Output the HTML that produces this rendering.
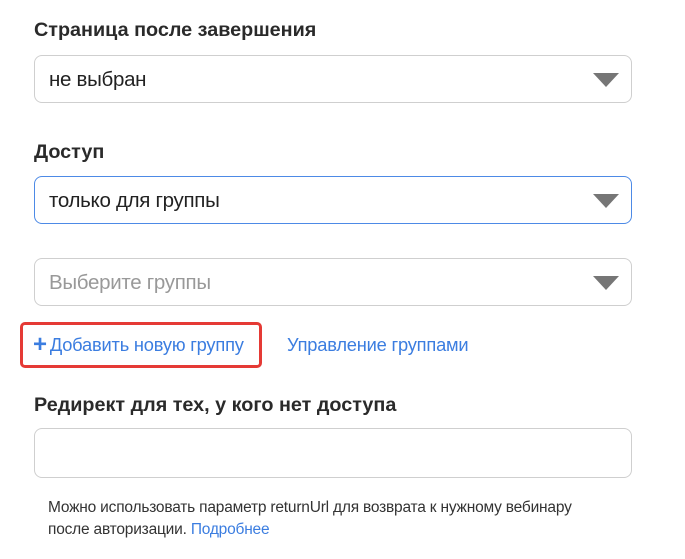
<!DOCTYPE html>
<html><head><meta charset="utf-8"><style>
body{margin:0;width:685px;height:559px;background:#fff;font-family:"Liberation Sans",sans-serif;position:relative;overflow:hidden;color:#222}
.a{position:absolute}
.lbl{font-weight:bold;font-size:19.8px;color:#2a2a2a;left:34px}
.box{left:34px;width:596px;height:46px;border:1px solid #cfcfcf;border-radius:8px;box-sizing:content-box}
.box span{position:absolute;left:14px;top:12px;font-size:20.5px;letter-spacing:-0.3px}
.tri{position:absolute;right:12px;top:17px;width:0;height:0;border-left:13px solid transparent;border-right:13px solid transparent;border-top:14px solid #767676}
.lnk{color:#3b7de0;font-size:18.3px;letter-spacing:-0.2px}
</style></head><body>
<div class="a lbl" style="top:19px">Страница после завершения</div>
<div class="a box" style="top:55px"><span style="color:#222">не выбран</span><div class="tri"></div></div>
<div class="a lbl" style="top:141px">Доступ</div>
<div class="a box" style="top:176px;border-color:#4d8ae6"><span style="color:#222">только для группы</span><div class="tri"></div></div>
<div class="a box" style="top:258px"><span style="color:#999">Выберите группы</span><div class="tri"></div></div>
<div class="a" style="left:20px;top:322px;width:236px;height:40px;border:3px solid #e53a35;border-radius:5px"></div>
<div class="a lnk" style="left:33px;top:334px"><span style="font-size:24px;line-height:17px;position:relative;top:1px;font-weight:bold;margin-right:3px">+</span>Добавить новую группу</div>
<div class="a lnk" style="left:287px;top:334px">Управление группами</div>
<div class="a lbl" style="top:394px">Редирект для тех, у кого нет доступа</div>
<div class="a box" style="top:428px;height:48px"></div>
<div class="a" style="left:48px;top:497px;font-size:15.5px;line-height:22px;color:#333;letter-spacing:-0.2px">Можно использовать параметр returnUrl для возврата к нужному вебинару<br>после авторизации. <span style="color:#3b7de0">Подробнее</span></div>
</body></html>
